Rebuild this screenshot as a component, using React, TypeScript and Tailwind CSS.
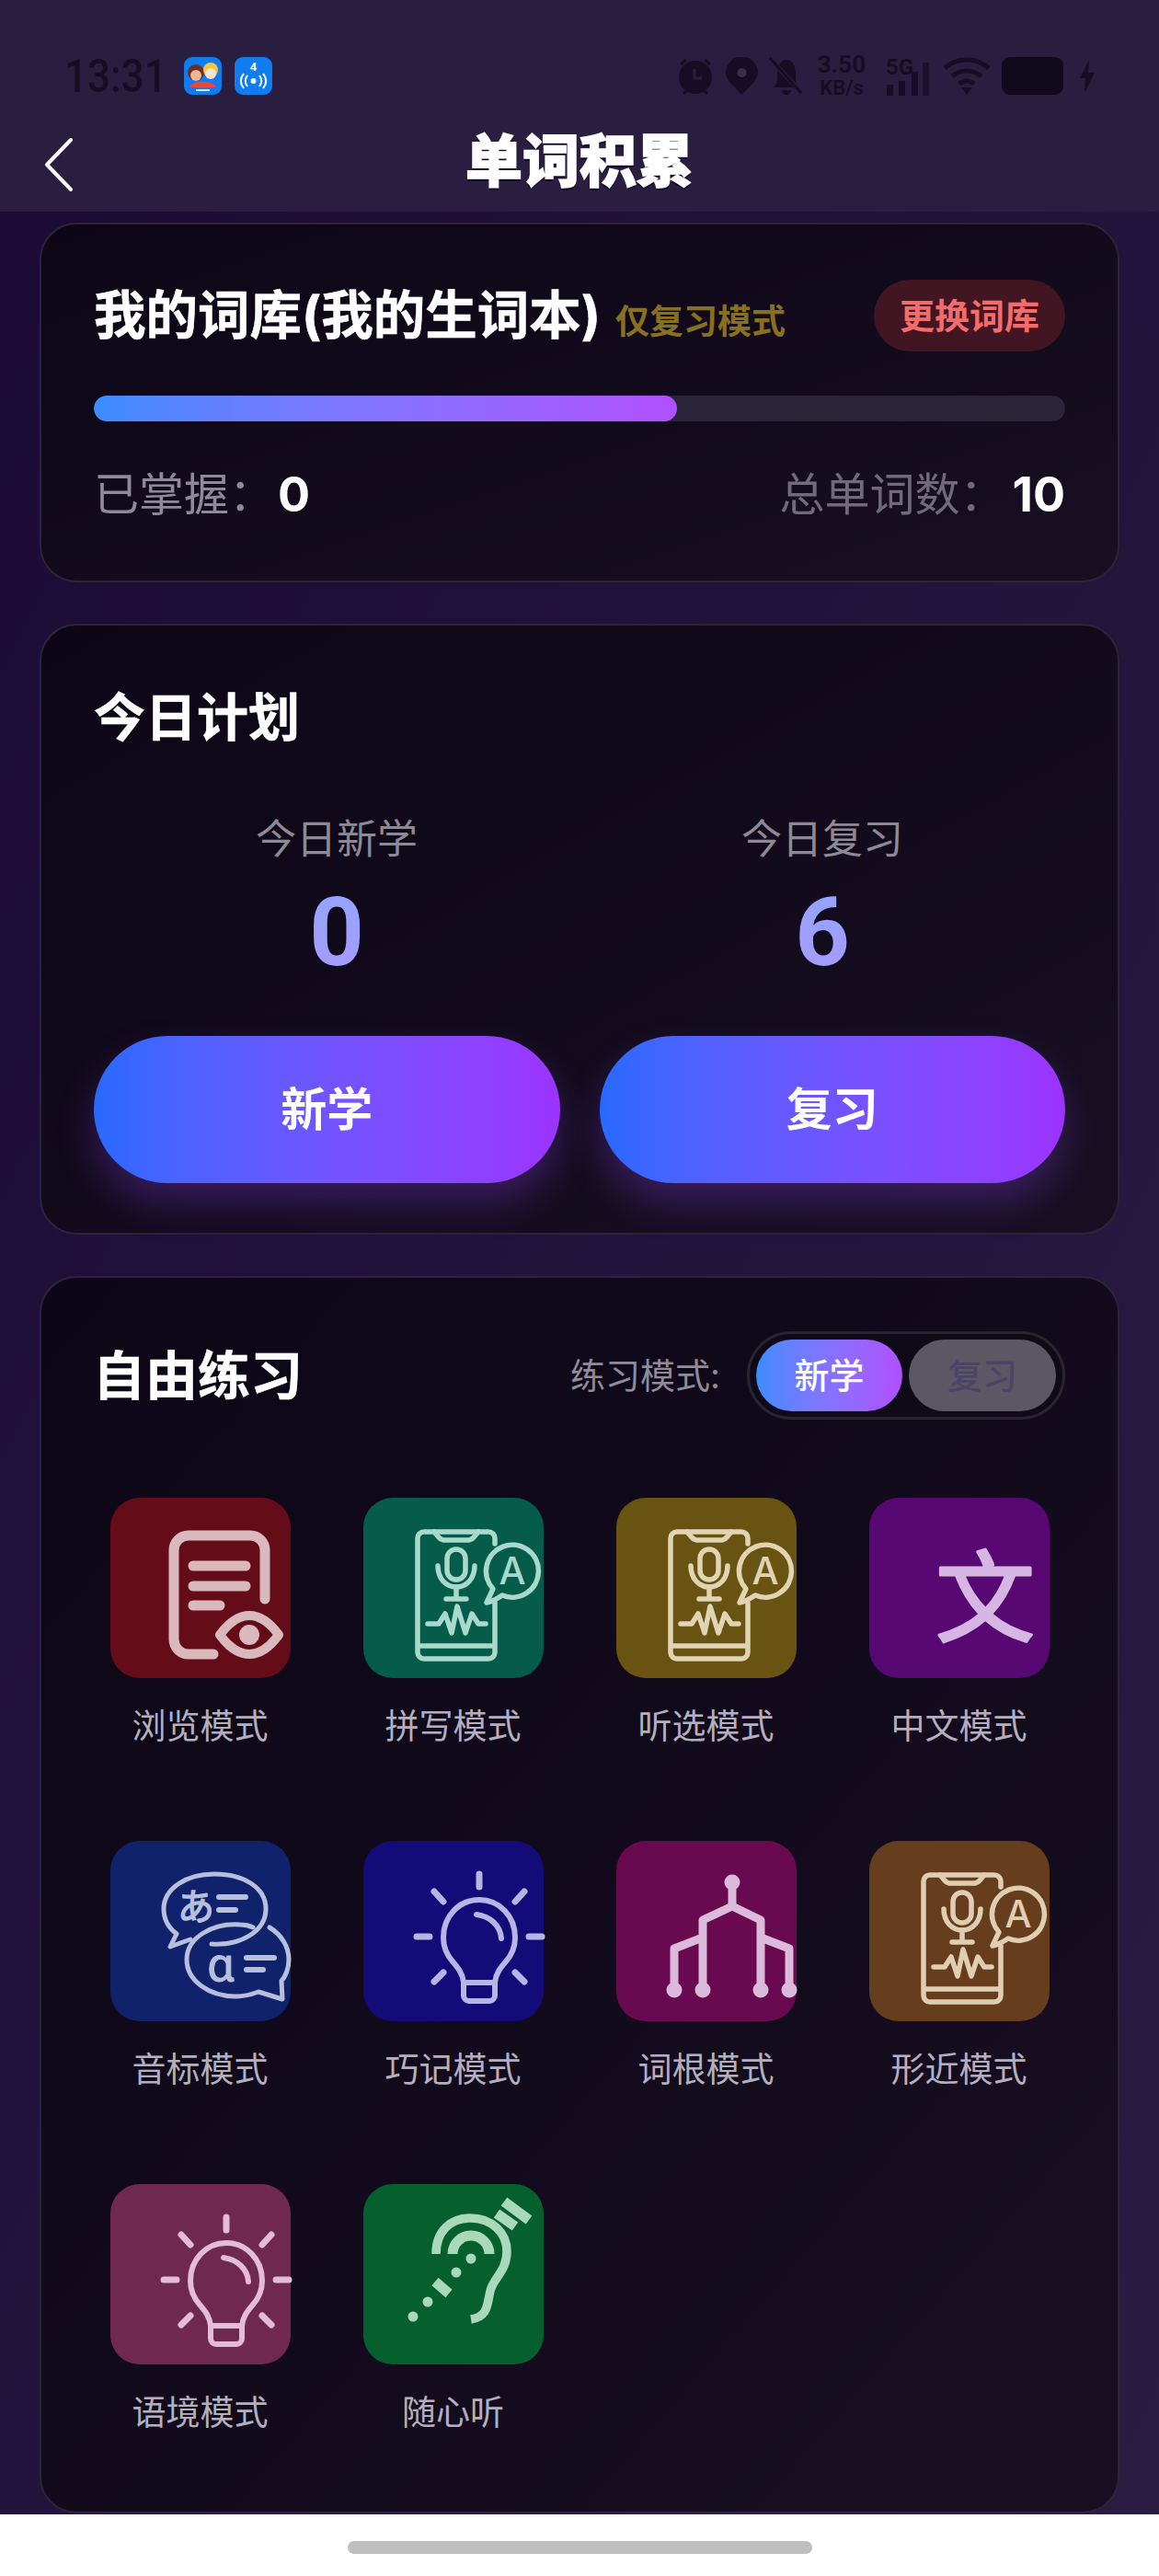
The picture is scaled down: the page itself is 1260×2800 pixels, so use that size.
import React from 'react';

const PhoneIcon: React.FC<{ color: string }> = ({ color }) => (
  <svg width="196" height="196" viewBox="0 0 196 196" fill="none" stroke={color} strokeWidth="5.5" strokeLinecap="round" strokeLinejoin="round" className="overflow-visible">
    <path d="M143 50V44a7 7 0 0 0-7-7H66a7 7 0 0 0-7 7v124a7 7 0 0 0 7 7h70a7 7 0 0 0 7-7v-54" />
    <path d="M77 37l5 6a8 8 0 0 0 5 3h28a8 8 0 0 0 5-3l5-6" />
    <path d="M60 161h82" />
    <rect x="91" y="56" width="20" height="33" rx="10" />
    <path d="M81 74c0 14 9 23 20 23s20-9 20-23" />
    <path d="M101 97v13M90 110h22" />
    <path d="M70 137h12l7-11 7 21 6-29 9 29 7-21 7 11h8" />
    <path d="M134 114L141 99A28.5 28.5 0 1 1 151 106C145 110 140 113 134 114z" />
    <text x="162" y="94" textAnchor="middle" fontSize="41" fontWeight="500" fill={color} stroke="none" fontFamily="Inter, sans-serif">A</text>
  </svg>
);

const DocEyeIcon: React.FC = () => (
  <svg width="196" height="196" viewBox="0 0 196 196" fill="none" stroke="#d9b9bd" strokeWidth="11" strokeLinecap="round" strokeLinejoin="round" className="overflow-visible">
    <path d="M112 170H85a16 16 0 0 1-16-16V57a16 16 0 0 1 16-16h67a16 16 0 0 1 16 16v53" />
    <path d="M90 74h57M90 96h57M90 117h29" />
    <path d="M119 149c8-11 19-21 32-21s24 10 32 21c-8 11-19 21-32 21s-24-10-32-21z" strokeWidth="10" />
    <circle cx="151" cy="149" r="11" fill="#d9b9bd" stroke="none" />
  </svg>
);

const ChineseIcon: React.FC = () => (
  <svg width="196" height="196" viewBox="0 0 196 196" className="overflow-visible">
    <text x="126" y="148" textAnchor="middle" fontSize="108" fill="#d6b6e2" stroke="#d6b6e2" strokeWidth="3" strokeLinejoin="round" fontFamily="'Noto Sans CJK SC', sans-serif">文</text>
  </svg>
);

const SpeechIcon: React.FC = () => (
  <svg width="196" height="196" viewBox="0 0 196 196" fill="none" stroke="#b7bfdd" strokeWidth="5" strokeLinecap="round" strokeLinejoin="round" className="overflow-visible">
    <path d="M110 112c32 2 59-14 59-38s-25-38-56-38-55 16-55 38c0 12 6 21 14 27l-7 14 22-8" />
    <path d="M173 94c13 8 21 21 21 35 0 10-4 19-8 23l1 20-26-8c-8 3-14 5-24 5-31 0-54-18-54-40 0-24 28-40 58-38 5 0 10 1 14 3" />
    <path d="M118 61h29M118 75h18M148 127h30M148 140h18" strokeWidth="6" />
    <text x="93" y="86" textAnchor="middle" fontSize="40" fill="#b7bfdd" stroke="#b7bfdd" strokeWidth="1.5" fontFamily="'Noto Sans CJK JP', sans-serif">あ</text>
    <text x="120" y="152" textAnchor="middle" fontSize="52" fill="#b7bfdd" stroke="#b7bfdd" strokeWidth="1" fontFamily="Roboto, sans-serif">α</text>
  </svg>
);

const BulbIcon: React.FC<{ color: string }> = ({ color }) => (
  <svg width="196" height="196" viewBox="0 0 196 196" fill="none" stroke={color} strokeWidth="6" strokeLinecap="round" strokeLinejoin="round" className="overflow-visible">
    <path d="M126 36v14M58 104h14M180 104h14M77 55l10 11M175 55l-10 11M77 153l10-10M175 153l-10-10" strokeWidth="7" />
    <path d="M109 154c-1-10-6-16-12-23-7-8-10-16-10-26 0-23 17-41 39-41s39 18 39 41c0 10-3 18-10 26-6 7-11 13-12 23" />
    <path d="M109 154v14a6 6 0 0 0 6 6h22a6 6 0 0 0 6-6v-14z" />
    <path d="M123 80c15 2 26 12 27 26" />
  </svg>
);

const TreeIcon: React.FC = () => (
  <svg width="196" height="196" viewBox="0 0 196 196" fill="none" stroke="#dcbadc" strokeWidth="9" strokeLinejoin="round" className="overflow-visible">
    <path d="M126 45v26L94 86v76M126 71l31 15v76M94 105l-31 12v45M157 105l31 12v45" />
    <g fill="#dcbadc" stroke="none">
      <circle cx="126" cy="45" r="8.5" />
      <circle cx="63" cy="162" r="8.5" />
      <circle cx="94" cy="162" r="8.5" />
      <circle cx="157" cy="162" r="8.5" />
      <circle cx="188" cy="162" r="8.5" />
    </g>
  </svg>
);

const EarIcon: React.FC = () => (
  <svg width="196" height="196" viewBox="0 0 196 196" fill="none" stroke="#a9d8ba" className="overflow-visible">
    <path d="M79 76C79 51 95 37 116 37c24 0 40 16 40 36 0 20-12 27-17 40-5 14-1 31-22 34" strokeWidth="9.5" />
    <path d="M97 76a20 20 0 0 1 40 0" strokeWidth="11" />
    <path d="M78 106l15 13M145 32l20 14M153 19l27 20" strokeWidth="11" />
    <g fill="#a9d8ba" stroke="none">
      <circle cx="117" cy="81" r="5.5" />
      <circle cx="101" cy="96" r="5.5" />
      <circle cx="70" cy="128" r="5.5" />
      <circle cx="54" cy="144" r="5.5" />
    </g>
  </svg>
);

const modes = [
  { label: '浏览模式', bg: 'bg-[#640c18]', icon: <DocEyeIcon /> },
  { label: '拼写模式', bg: 'bg-[#055c4b]', icon: <PhoneIcon color="#a9d9cd" /> },
  { label: '听选模式', bg: 'bg-[#695313]', icon: <PhoneIcon color="#e0d4b2" /> },
  { label: '中文模式', bg: 'bg-[#570872]', icon: <ChineseIcon /> },
  { label: '音标模式', bg: 'bg-[#10226c]', icon: <SpeechIcon /> },
  { label: '巧记模式', bg: 'bg-[#130b78]', icon: <BulbIcon color="#b7b5e6" /> },
  { label: '词根模式', bg: 'bg-[#690950]', icon: <TreeIcon /> },
  { label: '形近模式', bg: 'bg-[#663d1d]', icon: <PhoneIcon color="#e0ceb3" /> },
  { label: '语境模式', bg: 'bg-[#6f2950]', icon: <BulbIcon color="#e2bcd8" /> },
  { label: '随心听', bg: 'bg-[#05602d]', icon: <EarIcon /> },
];

const card = 'rounded-[40px] border-2 border-[#2c2438] bg-gradient-to-br from-[#0c0616] to-[#181022]';

const StatusBar: React.FC = () => (
  <div className="flex h-[125px] items-center justify-between pl-[70px] pr-[70px] pt-[40px] text-[#160d24]">
    <div className="flex items-center">
      <span className="w-[110px] origin-left scale-y-[1.15] text-[44px] leading-none font-['Roboto',sans-serif] font-medium">13:31</span>
      <div className="ml-[20px] flex gap-[14px]">
        <svg width="41" height="41" viewBox="0 0 41 41">
          <rect width="41" height="41" rx="9" fill="#0f7df0" />
          <circle cx="13" cy="17" r="9" fill="#6e2f24" />
          <circle cx="13" cy="20" r="6" fill="#f3b58f" />
          <circle cx="29" cy="14" r="8" fill="#f5c542" />
          <circle cx="29" cy="18" r="6" fill="#fbe3cf" />
          <path d="M6 33c3-6 10-7 14-6 5-1 12 0 15 6z" fill="#e8473f" />
          <rect x="13" y="35" width="15" height="2" fill="#d8ecff" />
        </svg>
        <svg width="41" height="41" viewBox="0 0 41 41" fill="none" stroke="#fff" strokeWidth="2">
          <rect width="41" height="41" rx="9" fill="#0f7df0" stroke="none" />
          <text x="20.5" y="15" textAnchor="middle" fontSize="13" fontWeight="700" fill="#fff" stroke="none" fontFamily="Roboto, sans-serif">4</text>
          <circle cx="20.5" cy="26" r="3" fill="#fff" stroke="none" />
          <path d="M14 20c-3 4-3 8 0 12M27 20c3 4 3 8 0 12M10 18c-4 5-4 11 0 16M31 18c4 5 4 11 0 16" />
        </svg>
      </div>
    </div>
    <div className="flex items-center">
      <svg width="48" height="42" viewBox="0 0 44 42" fill="#160d24">
        <circle cx="22" cy="22" r="18" />
        <path d="M6 8l6-5M38 8l-6-5M9 40l4-4M35 40l-4-4" stroke="#160d24" strokeWidth="3" />
        <path d="M21 13v10h8" stroke="#2b1e40" strokeWidth="3" fill="none" />
      </svg>
      <svg className="ml-[9px]" width="35" height="42" viewBox="0 0 35 42">
        <path d="M17.5 41C9 32 0 25 0 17a17.5 17.5 0 0 1 35 0c0 8-9 15-17.5 24z" fill="#160d24" />
        <circle cx="17.5" cy="17" r="5" fill="#3b2e4e" />
      </svg>
      <svg className="ml-[12px]" width="37" height="42" viewBox="0 0 37 42" fill="#160d24">
        <path d="M5 33c4-4 4-8 4-14C9 9 13 3 19 3s10 6 10 16c0 6 0 10 4 14z" />
        <path d="M14 36h10c0 3-2 5-5 5s-5-2-5-5z" />
        <path d="M2 3l34 36" stroke="#2b1e40" strokeWidth="5" />
        <path d="M1 1l34 38" stroke="#160d24" strokeWidth="3" />
      </svg>
      <div className="ml-[14px] flex w-[56px] flex-col items-center font-['Roboto',sans-serif] font-bold leading-[25px]">
        <span className="text-[26px]">3.50</span>
        <span className="text-[22px]">KB/s</span>
      </div>
      <div className="relative ml-[20px] h-[42px] w-[48px]">
        <span className="absolute left-0 top-[-7px] text-[24px] font-['Roboto',sans-serif] font-bold">5G</span>
        <svg className="absolute left-0 top-0" width="48" height="42" viewBox="0 0 48 42" fill="#160d24">
          <rect x="1" y="30" width="7" height="12" />
          <rect x="14" y="26" width="7" height="16" />
          <rect x="28" y="16" width="7" height="26" />
          <rect x="40" y="6" width="7" height="36" opacity="0.75" />
        </svg>
      </div>
      <svg className="ml-[15px]" width="50" height="42" viewBox="0 0 50 42" fill="none" stroke="#160d24" strokeWidth="5">
        <path d="M1 12c14-12 34-12 48 0M9 21c10-8 22-8 32 0M17 29c5-4 11-4 16 0" />
        <path d="M19 33h12l-6 8z" fill="#160d24" stroke="none" />
      </svg>
      <div className="ml-[13px] h-[41px] w-[67px] rounded-[9px] bg-[#110a1c]" />
      <svg className="ml-[18px]" width="16" height="36" viewBox="0 0 16 36" fill="#160d24">
        <path d="M10 0L0 20h6l-1 16L16 14h-7z" />
      </svg>
    </div>
  </div>
);

export default function App() {
  return (
    <div className="flex h-[2800px] w-[1260px] flex-col overflow-hidden bg-white font-['Inter','Noto_Sans_CJK_SC',sans-serif]">
      <header className="h-[230px] shrink-0 bg-[#2a1e40]">
        <StatusBar />
        <div className="relative flex h-[102px] items-center justify-center">
          <svg className="absolute left-[46px] top-[24px]" width="36" height="60" viewBox="0 0 36 60" fill="none" stroke="#fff" strokeWidth="4" strokeLinecap="round" strokeLinejoin="round">
            <path d="M31 3L5 30l26 27" />
          </svg>
          <h1 className="text-[62px] font-black leading-none text-white [-webkit-text-stroke:1.5px_white] [text-shadow:0_3px_0_#14092a]">单词积累</h1>
        </div>
      </header>

      <main className="flex h-[2503px] shrink-0 flex-col gap-[45px] bg-gradient-to-br from-[#1b0b36] to-[#2b1c42] px-[43px] pt-[12px]">
        <section className={`${card} h-[391px] shrink-0 px-[57px] pt-[59px]`}>
          <div className="flex h-[80px] items-center justify-between">
            <div className="flex items-center">
              <h2 className="text-[56.5px] font-bold leading-none text-white [-webkit-text-stroke:0.5px_white]">我的词库(我的生词本)</h2>
              <span className="ml-[16px] mt-[12px] text-[37px] font-bold leading-none text-[#87701f]">仅复习模式</span>
            </div>
            <button className="h-[78px] w-[208px] rounded-[39px] bg-[#421522] text-[38px] font-bold text-[#f26c6c]">更换词库</button>
          </div>
          <div className="mt-[47px] h-[28px] overflow-hidden rounded-full bg-[#2a2438]">
            <div className="h-full w-[60%] rounded-full bg-gradient-to-r from-[#3a8bff] to-[#b04fff]" />
          </div>
          <div className="mt-[48px] flex items-center justify-between">
            <p className="flex items-center text-[49px] leading-[64px] text-[#8e8a99]">
              已掌握：<span className="ml-[4px] text-[52px] font-bold text-white">0</span>
            </p>
            <p className="flex items-center text-[49px] leading-[64px] text-[#6f6b7b]">
              总单词数：<span className="ml-[8px] text-[52px] font-bold text-white">10</span>
            </p>
          </div>
        </section>

        <section className={`${card} h-[664px] shrink-0 px-[57px] pt-[62px]`}>
          <h2 className="text-[56px] font-bold leading-[76px] text-white [-webkit-text-stroke:0.5px_white]">今日计划</h2>
          <div className="mt-[64px] grid grid-cols-2">
            <div className="flex flex-col items-center">
              <span className="text-[44px] leading-[60px] text-[#8d8a96]">今日新学</span>
              <span className="mt-[7px] bg-gradient-to-b from-[#8fa6ff] to-[#a999ff] bg-clip-text font-['Roboto',sans-serif] text-[104px] font-bold leading-[130px] text-transparent">0</span>
            </div>
            <div className="flex flex-col items-center">
              <span className="text-[44px] leading-[60px] text-[#8d8a96]">今日复习</span>
              <span className="mt-[7px] bg-gradient-to-b from-[#8fa6ff] to-[#a999ff] bg-clip-text font-['Roboto',sans-serif] text-[104px] font-bold leading-[130px] text-transparent">6</span>
            </div>
          </div>
          <div className="mt-[47px] grid grid-cols-2 gap-[43px]">
            {['新学', '复习'].map(label => (
              <button key={label} className="h-[160px] rounded-[80px] bg-gradient-to-r from-[#2669ff] to-[#9b33ff] text-[50px] font-bold text-white shadow-[0_22px_40px_rgba(130,60,220,0.32)]">
                {label}
              </button>
            ))}
          </div>
        </section>

        <section className={`${card} h-[1345px] shrink-0 px-[35px] pt-[57px]`}>
          <div className="flex h-[98px] items-center justify-between pl-[21px] pr-[22px]">
            <h2 className="text-[57px] font-bold leading-none text-white [-webkit-text-stroke:0.5px_white]">自由练习</h2>
            <div className="flex items-center">
              <span className="text-[38px] text-[#8f8b99]">练习模式:</span>
              <div className="ml-[29px] flex h-[96px] w-[346px] items-center justify-between rounded-full border-[3px] border-[#2a2430] bg-[#0e0a18] px-[7px]">
                <span className="flex h-[78px] w-[159px] items-center justify-center rounded-full bg-gradient-to-r from-[#3a8bff] to-[#b04fff] text-[38px] font-medium text-white">新学</span>
                <span className="flex h-[78px] w-[160px] items-center justify-center rounded-full bg-[#5b5864] text-[38px] font-medium text-[#4a4568]">复习</span>
              </div>
            </div>
          </div>
          <div className="mt-[84px] grid grid-cols-[repeat(4,275px)] gap-y-[96px]">
            {modes.map(mode => (
              <div key={mode.label} className="flex h-[277px] flex-col items-center">
                <div className={`h-[196px] w-[196px] rounded-[32px] ${mode.bg}`}>{mode.icon}</div>
                <span className="mt-[28px] text-[37px] leading-[50px] text-[#b4afbe]">{mode.label}</span>
              </div>
            ))}
          </div>
        </section>
      </main>

      <footer className="flex flex-1 items-start justify-center bg-white pt-[29px]">
        <div className="h-[14px] w-[505px] rounded-full bg-[#bfbfbf]" />
      </footer>
    </div>
  );
}
